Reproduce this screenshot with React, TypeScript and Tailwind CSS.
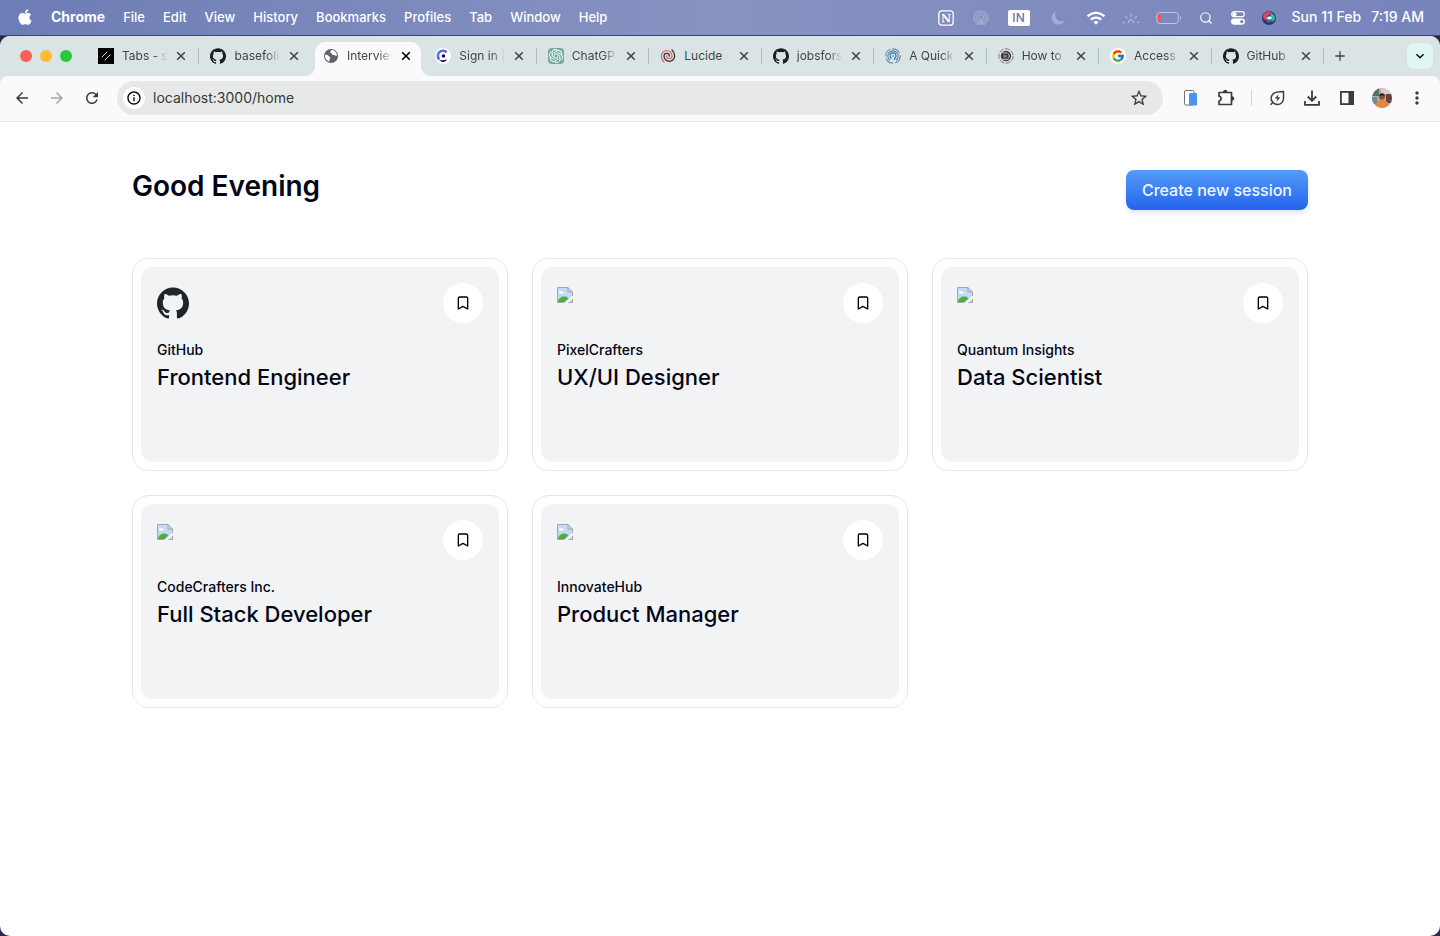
import React from "react";
import { FaApple } from "react-icons/fa";
import { FcGoogle } from "react-icons/fc";
import { SiGithub, SiOpenai } from "react-icons/si";
import {
    MdAdd,
    MdArrowBack,
    MdArrowForward,
    MdExpandMore,
    MdInfoOutline,
    MdMoreVert,
    MdRefresh,
    MdStarBorder,
    MdWifi,
} from "react-icons/md";
import { Bookmark, Search } from "lucide-react";

const menus = ["File", "Edit", "View", "History", "Bookmarks", "Profiles", "Tab", "Window", "Help"];

const SlashIcon = () => (
    <svg viewBox="0 0 16 16" className="h-4 w-4">
        <rect width="16" height="16" fill="#000" />
        <path d="M4 9l5-5M7 12l5-5" stroke="#ddd" strokeWidth="1" strokeLinecap="round" />
    </svg>
);

const GlobeIcon = () => (
    <svg viewBox="0 0 16 16" className="h-4 w-4">
        <circle cx="8" cy="8" r="7" fill="#5f6368" />
        <path d="M2.4 6.5c1.5.2 2.6.5 3.2 1.4.5.8 1.6.4 1.7 1.5.1.8-.8 1-.8 1.8v2.3C3.8 13 1.9 10.5 2 8zM8.5 2.1c-.2 1-1.3 1-1.4 2-.1.9 1 .8 1.6 1.4.5.5.3 1.3 1 1.6.8.3 1.3-.3 2 .1.6.3 1 .7 2.1.6.3-3-2-5.7-5.3-5.7z" fill="#fff" />
    </svg>
);

const ClerkIcon = () => (
    <svg viewBox="0 0 16 16" className="h-4 w-4">
        <circle cx="8" cy="8" r="8" fill="#fff" />
        <path d="M11.5 4.3A5 5 0 0 0 4.2 11.3" fill="none" stroke="#5b57f5" strokeWidth="2.6" />
        <path d="M4.8 3.9A5 5 0 0 0 3.2 9" fill="none" stroke="#3d8df5" strokeWidth="1.5" />
        <circle cx="8.5" cy="8" r="1.8" fill="#1f0256" />
        <path d="M4.2 11.8c2 .8 5 .8 7.8-.6-1.5 3.5-6.3 3.5-7.8.6z" fill="#1f0256" />
    </svg>
);

const ChatIcon = () => (
    <span className="flex h-4 w-4 items-center justify-center rounded bg-[#74aa9c]">
        <SiOpenai className="h-3.5 w-3.5 text-white" />
    </span>
);

const LucideLogo = () => (
    <svg viewBox="0 0 24 24" className="h-4 w-4" fill="none" strokeWidth="2" strokeLinecap="round">
        <path d="M14 12a4 4 0 0 0-8 0 8 8 0 0 0 16 0 11.97 11.97 0 0 0-4-8.944" stroke="#2d3748" />
        <path d="M10 12a4 4 0 0 0 8 0 8 8 0 1 0-16 0 11.97 11.97 0 0 0 4.063 9" stroke="#f56565" />
    </svg>
);

const RadarIcon = () => (
    <svg viewBox="0 0 16 16" className="h-4 w-4" fill="none">
        <circle cx="8" cy="8" r="7.2" stroke="#6f93ad" strokeWidth="1.2" strokeDasharray="9 2" />
        <path d="M5 12.3a5.2 5.2 0 1 1 6 0" stroke="#4d83b8" strokeWidth="1.1" />
        <path d="M6.5 10.5a3 3 0 1 1 3 0V12" stroke="#2c6cab" strokeWidth="1.1" />
        <circle cx="8" cy="8" r=".8" fill="#2c6cab" />
    </svg>
);

const PortraitIcon = () => (
    <svg viewBox="0 0 16 16" className="h-4 w-4">
        <circle cx="8" cy="8" r="7.2" fill="#dce3e2" stroke="#777" strokeDasharray="5 1.5" />
        <circle cx="8" cy="8" r="5.2" fill="#3c3c3c" />
        <path d="M4.5 5h5M4.5 11.3h6M10.5 5.5c1 1.5 1 3.5 0 5" stroke="#ccc" strokeWidth="1" fill="none" />
        <path d="M5.5 7h3v2.5h-3z" fill="#888" />
    </svg>
);

const GoogleIcon = () => (
    <span className="flex h-4 w-4 items-center justify-center rounded-full bg-white">
        <FcGoogle className="h-3.5 w-3.5" />
    </span>
);

const GithubIcon = () => <SiGithub className="h-4 w-4 text-[#1b1f23]" />;

const tabs = [
    { title: "Tabs - s", icon: SlashIcon, line: true },
    { title: "basefoli", icon: GithubIcon, line: false },
    { title: "Interviev", icon: GlobeIcon, line: false, active: true },
    { title: "Sign in |", icon: ClerkIcon, line: true },
    { title: "ChatGP", icon: ChatIcon, line: true },
    { title: "Lucide", icon: LucideLogo, line: true, short: true },
    { title: "jobsfors", icon: GithubIcon, line: true },
    { title: "A Quick", icon: RadarIcon, line: true },
    { title: "How to", icon: PortraitIcon, line: true },
    { title: "Access", icon: GoogleIcon, line: true },
    { title: "GitHub", icon: GithubIcon, line: true },
];

const sessions = [
    { company: "GitHub", role: "Frontend Engineer", logo: true },
    { company: "PixelCrafters", role: "UX/UI Designer" },
    { company: "Quantum Insights", role: "Data Scientist" },
    { company: "CodeCrafters Inc.", role: "Full Stack Developer" },
    { company: "InnovateHub", role: "Product Manager" },
];

const MenuBar = () => (
    <header className="flex h-9 items-center justify-between border-b border-[#3c4470] bg-linear-to-r from-[#6d7db6] via-[#8893c1] to-[#7783bb] pr-4 pl-[17px] text-white">
        <nav className="flex items-center gap-[18px] pb-0.5 text-[13px] leading-5 font-medium text-shadow-sm">
            <FaApple className="h-[18px] w-4" />
            <button className="text-sm leading-5 font-bold">Chrome</button>
            {menus.map((menu) => (
                <button key={menu}>{menu}</button>
            ))}
        </nav>
        <div className="flex items-center gap-4">
            <span className="flex w-4 justify-center">
                <svg viewBox="0 0 16 16" className="h-4 w-4" fill="none" stroke="#fff">
                    <rect x=".8" y=".8" width="14.4" height="14.4" rx="3" strokeWidth="1.3" />
                    <path d="M4 4.5h2M10 4.5h2.5M4 11.8h2.5M5 4.5v7.3M11.2 4.5v7.3" strokeWidth="1" />
                    <path d="m5.3 4.5 5.7 7.3" strokeWidth="2" />
                </svg>
            </span>
            <span className="flex w-[22px] justify-center">
                <svg viewBox="0 0 16 16" className="h-4 w-4 opacity-25" fill="none" stroke="#fff" strokeWidth="1.3">
                    <path d="M4.5 14a7 7 0 1 1 7 0M5.5 12a4.8 4.8 0 1 1 5 0M6.5 10a2.6 2.6 0 1 1 3 0" />
                    <path d="m8 9 3.5 5h-7z" fill="#fff" />
                </svg>
            </span>
            <span className="flex h-4 w-[22px] items-center justify-center rounded-xs bg-white text-xs font-medium text-[#6672a8]">IN</span>
            <span className="flex w-6 justify-center">
                <svg viewBox="0 0 16 16" className="h-4 w-4 opacity-30" fill="#fff">
                    <path d="M6 1.5A6.8 6.8 0 1 0 14.8 10.5 6.5 6.5 0 0 1 6 1.5z" />
                </svg>
            </span>
            <span className="flex w-5 justify-center">
                <MdWifi className="h-5 w-5" />
            </span>
            <svg viewBox="0 0 18 16" className="h-4 w-[18px] opacity-35" fill="none" stroke="#fff" strokeWidth="1.3" strokeLinecap="round">
                <path d="M6.5 12.5a2.5 2.5 0 0 1 5 0M9 4v2.5M3.5 6.5 5 8M14.5 6.5 13 8M1 12.5h1.5M15.5 12.5H17" />
            </svg>
            <svg viewBox="0 0 26 14" className="h-3.5 w-[26px]" fill="none">
                <rect x=".8" y="1.5" width="21.5" height="11" rx="3" stroke="#fff" strokeOpacity=".5" />
                <path d="M5 3H4a2 2 0 0 0-2 2v4a2 2 0 0 0 2 2h1z" fill="#f0555c" />
                <path d="M24 5c1.5.8 1.5 3.2 0 4z" fill="#fff" fillOpacity=".5" />
            </svg>
            <span className="flex w-4 justify-center">
                <Search className="h-3.5 w-3.5" />
            </span>
            <span className="flex w-4 justify-center">
                <svg viewBox="0 0 14 14" className="h-3.5 w-3.5">
                    <rect x=".7" y=".7" width="12.6" height="5" rx="2.5" fill="none" stroke="#fff" strokeWidth="1.2" />
                    <circle cx="3.5" cy="3.2" r="2" fill="#fff" />
                    <rect y="7.5" width="14" height="6.2" rx="3.1" fill="#fff" />
                    <circle cx="10.8" cy="10.6" r="1.7" fill="#7783bb" />
                </svg>
            </span>
            <svg viewBox="0 0 14 14" className="h-3.5 w-3.5">
                <circle cx="7" cy="7" r="7" fill="#35345c" />
                <path d="M1 5C2 1 7-1 10 2 7 3 5 5 4.5 9 2 9 1 7 1 5z" fill="#d8485f" />
                <path d="M9 2c4 1 5 5 3 8-2 1-4 0-5-2z" fill="#2bb5a5" />
                <path d="M4 10c2 2 5 2 7 0-2-1-3-2-4-3z" fill="#3c6fb0" />
                <path d="M4.5 7.5C6 5 8 5 10 6.5 8.5 8.8 6.5 9 4.5 7.5z" fill="#f1f7fb" />
            </svg>
            <div className="flex gap-2.5 pb-0.5 text-sm font-medium">
                <span>Sun 11 Feb</span>
                <span>7:19 AM</span>
            </div>
        </div>
    </header>
);

const TabStrip = () => (
    <div className="flex h-10 items-center bg-[#dbe4e4] text-[#3f4747]">
        <div className="flex w-[87px] shrink-0 gap-2 pl-5">
            <button aria-label="Close window" className="h-3 w-3 rounded-full bg-[#fe5f57]" />
            <button aria-label="Minimize" className="h-3 w-3 rounded-full bg-[#febb2e]" />
            <button aria-label="Zoom" className="h-3 w-3 rounded-full bg-[#28c840]" />
        </div>
        <div className="flex min-w-0 flex-1">
            {tabs.map(({ title, icon: Icon, line, active, short }, i) => (
                <div key={i} className="relative flex h-10 min-w-0 flex-1 items-center pr-2.5 pl-[11px]">
                    {active && (
                        <div className="absolute inset-x-[3px] top-1.5 bottom-0 rounded-t-[10px] bg-[#fbf9fb]">
                            <span className="absolute bottom-0 -left-2.5 h-2.5 w-2.5 bg-[radial-gradient(circle_at_0_0,transparent_10px,#fbf9fb_10px)]" />
                            <span className="absolute -right-2.5 bottom-0 h-2.5 w-2.5 bg-[radial-gradient(circle_at_100%_0,transparent_10px,#fbf9fb_10px)]" />
                        </div>
                    )}
                    <span className="relative shrink-0">
                        <Icon />
                    </span>
                    <button
                        className={
                            short
                                ? "relative ml-2 min-w-0 flex-1 text-left text-xs whitespace-nowrap"
                                : "relative ml-2 min-w-0 flex-1 text-left text-xs whitespace-nowrap mask-r-from-70% mask-r-to-100%"
                        }
                    >
                        {title}
                    </button>
                    <button aria-label="Close tab" className={active ? "relative ml-1.5 shrink-0 text-black" : "relative ml-1.5 shrink-0"}>
                        <svg viewBox="0 0 16 16" className="h-4 w-4" fill="none" stroke="currentColor" strokeWidth="1.6">
                            <path d="m4.2 4.2 7.6 7.6M11.8 4.2l-7.6 7.6" />
                        </svg>
                    </button>
                    {line && <span className="absolute top-3 right-0 h-4 w-px bg-[#aebfbe]" />}
                </div>
            ))}
        </div>
        <div className="flex w-[116px] shrink-0 items-center justify-between pr-[7px] pl-2">
            <button aria-label="New tab">
                <MdAdd className="h-4 w-4" />
            </button>
            <button aria-label="Search tabs" className="flex h-[26px] w-[26px] items-center justify-center rounded-lg bg-[#dff6f3] text-black">
                <MdExpandMore className="h-4 w-4" />
            </button>
        </div>
    </div>
);

const ToolButton = ({ label, children }: { label: string; children: React.ReactNode }) => (
    <button aria-label={label} className="flex w-[35px] shrink-0 items-center justify-center">
        {children}
    </button>
);

const Toolbar = () => (
    <div className="bg-[#dbe4e4]">
        <div className="flex h-[46px] items-center rounded-t-lg border-b border-[#ebe7e9] bg-[#fbf9fb] pr-1.5 pb-px pl-1 text-[#3a3d3d]">
            <ToolButton label="Back">
                <MdArrowBack className="h-[18px] w-[18px]" />
            </ToolButton>
            <ToolButton label="Forward">
                <MdArrowForward className="h-[18px] w-[18px] text-[#a3a3a5]" />
            </ToolButton>
            <ToolButton label="Reload">
                <MdRefresh className="h-[18px] w-[18px]" />
            </ToolButton>
            <div className="mr-2.5 ml-2 flex h-[34px] flex-1 items-center rounded-full bg-[#e6e9e8] pr-3.5 pl-1.5">
                <span className="flex h-[22px] w-[22px] items-center justify-center rounded-full bg-white">
                    <MdInfoOutline className="h-4 w-4 text-black" />
                </span>
                <input
                    aria-label="Address"
                    defaultValue="localhost:3000/home"
                    className="ml-2 min-w-0 flex-1 bg-transparent text-sm text-[#35393a] outline-none"
                />
                <button aria-label="Bookmark this tab">
                    <MdStarBorder className="h-5 w-5" />
                </button>
            </div>
            <ToolButton label="Responsive viewer">
                <svg viewBox="0 0 16 16" className="h-4 w-4">
                    <rect x="1.5" y=".5" width="9.5" height="14.5" rx="1.5" fill="#fff" stroke="#6b7275" />
                    <rect x="6" y="3" width="8" height="12.5" rx="1" fill="#4f92f0" />
                </svg>
            </ToolButton>
            <ToolButton label="Extensions">
                <svg viewBox="0 0 18 18" className="h-[18px] w-[18px]" fill="none" stroke="currentColor" strokeWidth="1.7" strokeLinejoin="round">
                    <path d="M2 3.5h12.5V15.5H2V12c2.8 0 2.8-4.8 0-4.8z" />
                    <path d="M6.5 3a1.8 1.8 0 0 1 3.6 0zM15 7.7a1.8 1.8 0 0 1 0 3.6z" fill="currentColor" strokeWidth="1" />
                </svg>
            </ToolButton>
            <span className="flex w-4 justify-center">
                <span className="h-4 w-px bg-[#cbdad9]" />
            </span>
            <ToolButton label="Energy saver">
                <svg viewBox="0 0 18 18" className="h-[18px] w-[18px]" fill="none" stroke="currentColor" strokeWidth="1.5" strokeLinejoin="round">
                    <path d="M15.5 2.5v7a6 6 0 0 1-6 6A6 6 0 0 1 5 13.5a5.8 5.8 0 0 1 0-8.5C7 3 9.5 2.5 15.5 2.5zM5 13.3 2.5 15.8" />
                    <path d="M10.5 5.2 6.8 9.5h2.4l-.7 3.3 3.8-4.5H9.8z" fill="currentColor" stroke="none" />
                </svg>
            </ToolButton>
            <ToolButton label="Downloads">
                <svg viewBox="0 0 18 18" className="h-[18px] w-[18px]" fill="none" stroke="currentColor" strokeWidth="1.8">
                    <path d="M9 1.5v10M4.7 7.5 9 11.8l4.3-4.3M2 12v3.8h14V12" />
                </svg>
            </ToolButton>
            <ToolButton label="Side panel">
                <svg viewBox="0 0 16 16" className="h-4 w-4">
                    <rect x="1.9" y="1.9" width="12.2" height="12.2" fill="none" stroke="currentColor" strokeWidth="1.8" />
                    <path d="M9.5 2H14v12H9.5z" fill="currentColor" />
                </svg>
            </ToolButton>
            <ToolButton label="Profile">
                <svg viewBox="0 0 20 20" className="h-5 w-5">
                    <clipPath id="avatar">
                        <circle cx="10" cy="10" r="10" />
                    </clipPath>
                    <g clipPath="url(#avatar)">
                        <rect width="20" height="20" fill="#b9a69c" />
                        <path d="M0 0h7v8H0z" fill="#4f7560" />
                        <path d="M9 0h11v6H9z" fill="#d9cbd0" />
                        <path d="M14 6h6v9h-6z" fill="#6b4038" />
                        <path d="M0 9h5v7H0z" fill="#5e91a6" />
                        <path d="M3 20c0-6 3-8 7-8s7 2 7 8z" fill="#e2873f" />
                        <circle cx="10" cy="9" r="2.8" fill="#8b4f35" />
                        <path d="M7 8.5c0-4.5 6-4.5 6 0L11.5 7.5H8z" fill="#2a1c1c" />
                    </g>
                </svg>
            </ToolButton>
            <ToolButton label="Menu">
                <MdMoreVert className="h-5 w-5" />
            </ToolButton>
        </div>
    </div>
);

const BrokenImage = () => (
    <svg viewBox="0 0 16 16" className="h-4 w-4">
        <path d="M.5.5h10.5L15.5 5v4L9 15.5H.5z" fill="#c6d9f5" />
        <path d="M2 5.5c0-1.5 2-2 2.5-.8C6 4 7.3 5.5 6.5 6.5H2.5z" fill="#fff" />
        <path d="M1 15.5c0-4 4-7 8.5-5.5l2 1.5-4.5 4z" fill="#4caf38" />
        <path d="M15.5 9 8 15.5h3L15.5 11z" fill="#fff" />
        <path d="M12 15.5 15.5 12v3.5z" fill="#b9d6b4" />
        <path d="M.5 15.5V.5h10.5L15.5 5v4M11 .5V5h4.5M.5 15.5H7M11.5 15.5h4V12" fill="none" stroke="#a2a7ad" />
    </svg>
);

const SessionCard = ({ company, role, logo }: { company: string; role: string; logo?: boolean }) => (
    <article className="rounded-2xl border border-gray-200 p-2">
        <div className="h-[195px] rounded-xl bg-[#f2f3f5] p-4">
            <div className="flex items-center justify-between">
                <div className="h-8 w-8">
                    {logo ? <SiGithub className="h-8 w-8 text-[#1f2528]" /> : <BrokenImage />}
                </div>
                <button aria-label="Save session" className="flex h-10 w-10 items-center justify-center rounded-full bg-white text-black">
                    <Bookmark className="h-4 w-4" />
                </button>
            </div>
            <h3 className="mt-4 text-sm leading-[22px] font-medium">{company}</h3>
            <p className="text-[22px] leading-8 font-medium">{role}</p>
        </div>
    </article>
);

const App = () => {
    return (
        <div className="flex min-h-screen flex-col bg-[#2b2a4d] font-['Inter',sans-serif]">
            <MenuBar />
            <div className="flex flex-1 flex-col overflow-hidden rounded-[10px] bg-white">
                <TabStrip />
                <Toolbar />
                <main className="mx-auto w-full max-w-[1176px] flex-1 pt-12 pb-12 text-[#020617]">
                    <div className="flex items-start justify-between">
                        <h1 className="text-[28px] leading-8 font-semibold">Good Evening</h1>
                        <button className="h-10 rounded-lg bg-linear-to-b from-[#559bf9] to-[#2563eb] px-4 font-medium text-[#f0f7ff] shadow-md shadow-blue-100">
                            Create new session
                        </button>
                    </div>
                    <div className="mt-12 grid grid-cols-3 gap-6">
                        {sessions.map((session) => (
                            <SessionCard key={session.company} {...session} />
                        ))}
                    </div>
                </main>
            </div>
        </div>
    );
};

export default App;
